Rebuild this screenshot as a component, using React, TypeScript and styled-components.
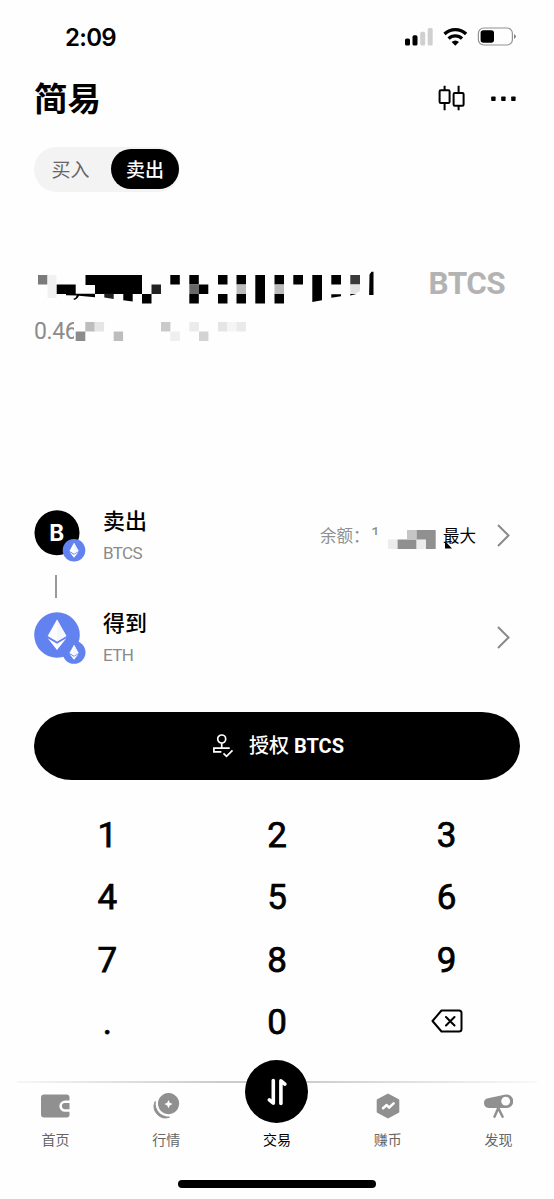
import React from 'react';
import styled, { createGlobalStyle } from 'styled-components';

const GlobalStyle = createGlobalStyle`
  * { box-sizing: border-box; }
  body { margin: 0; background: #fefefe; }
  button { border: 0; padding: 0; background: none; font: inherit; color: inherit; }
  svg { display: block; flex: none; }
`;

const latin = `Roboto, "Noto Sans CJK SC", sans-serif`;
const cjk = `"Noto Sans CJK SC", sans-serif`;

const Screen = styled.main`
  width: 554px;
  height: 1199px;
  display: flex;
  flex-direction: column;
  overflow: hidden;
  background: #fefefe;
  color: #000;
  font-family: ${cjk};

  & > * { flex: none; }
`;

const StatusBar = styled.header`
  height: 74px;
  padding: 0 37px 0 65px;
  display: flex;
  align-items: center;
  justify-content: space-between;
`;

const Clock = styled.time`
  padding-top: 2px;
  font: 600 24px/30px Inter, sans-serif;
  letter-spacing: -0.7px;
`;

const TitleBar = styled.div`
  height: 48px;
  padding: 0 37px 0 34px;
  display: flex;
  align-items: center;
  justify-content: space-between;
`;

const Title = styled.h1`
  margin: 0;
  padding-bottom: 3px;
  font-size: 33.5px;
  line-height: 43px;
  font-weight: 700;
`;

const Actions = styled.div`
  display: flex;
  align-items: center;
  gap: 25px;
`;

const Toggle = styled.div`
  width: 146px;
  height: 45px;
  margin: 25px 0 0 34px;
  padding: 2px 1px 3px 0;
  display: flex;
  border-radius: 23px;
  background: #f3f3f3;
`;

const ToggleItem = styled.button<{ $active?: boolean }>`
  width: ${p => (p.$active ? 68 : 77)}px;
  height: 40px;
  padding-right: ${p => (p.$active ? 0 : 4)}px;
  border-radius: 20px;
  background: ${p => (p.$active ? '#000' : 'transparent')};
  color: ${p => (p.$active ? '#fff' : '#666')};
  font-size: 19px;
  line-height: 38px;
  font-weight: ${p => (p.$active ? 500 : 400)};
`;

const Amount = styled.section`
  height: 88.4px;
  margin: 73px 49px 0 34px;
  display: flex;
  flex-direction: column;
`;

const AmountRow = styled.div`
  height: 45.4px;
  display: flex;
  align-items: center;
  justify-content: space-between;
`;

const Unit = styled.span`
  padding-bottom: 7px;
  font: 700 31.5px/38px ${latin};
  color: #b3b3b3;
  letter-spacing: -0.6px;
`;

const Converted = styled.div`
  height: 43px;
  display: flex;
  align-items: center;
`;

const ConvertedValue = styled.span`
  width: 40px;
  white-space: nowrap;
  font: 400 23px/30px ${latin};
  letter-spacing: -0.4px;
  color: #8c8c8c;
`;

const ConvertedMask = styled.svg`
  position: relative;
`;

const Pair = styled.section`
  height: 159.5px;
  margin: 153.6px 44px 0 34px;
  display: flex;
  flex-direction: column;
  justify-content: space-between;
`;

const TokenRow = styled.div`
  height: 57px;
  display: flex;
  align-items: center;
`;

const TokenIcon = styled.div`
  width: 52px;
  height: 52px;
  margin: 1px 17px 0 0;
`;

const TokenText = styled.div`
  flex: 1;
  height: 57px;
  display: flex;
  flex-direction: column;
  justify-content: space-between;
`;

const TokenAction = styled.span`
  margin-top: -2px;
  font-size: 22px;
  line-height: 28px;
  font-weight: 500;
`;

const TokenName = styled.span`
  font: 400 17px/22px ${latin};
  letter-spacing: -0.6px;
  color: #8a8a8a;
`;

const Connector = styled.div`
  width: 2px;
  height: 23px;
  margin-left: 21px;
  background: #999;
`;

const Balance = styled.div`
  display: flex;
  align-items: center;
  margin-right: 21px;
  font-size: 16.5px;
  line-height: 26px;
`;

const BalanceLabel = styled.span`
  width: 51px;
  white-space: nowrap;
  color: #909090;
`;

const BalanceDigit = styled.span`
  position: relative;
  width: 17px;
  padding-bottom: 2px;
  font: 400 16px/24px ${latin};
  color: #888;

  &::after {
    content: '';
    position: absolute;
    inset: 13px 4px 4px 0;
    background: #fefefe;
  }
`;

const MaxButton = styled.button`
  margin-left: 7px;
  position: relative;
`;

const Marker = styled.svg`
  position: absolute;
  left: 2px;
  top: 19px;
`;

const Approve = styled.button`
  width: 486px;
  height: 68px;
  margin: 45.5px 0 0 34px;
  padding-left: 2px;
  display: flex;
  align-items: center;
  justify-content: center;
  gap: 15px;
  border-radius: 38px / 34px;
  background: #000;
  color: #fff;
  font: 500 20px/28px ${latin};
`;

const ApproveSymbol = styled.span`
  font-weight: 700;
`;

const Keypad = styled.section`
  width: 509px;
  margin: 22.5px 0 0 22.5px;
  display: grid;
  grid-template-columns: repeat(3, 1fr);
  grid-auto-rows: 62.5px;
`;

const Key = styled.button`
  display: flex;
  align-items: center;
  justify-content: center;
  font: 400 35px/44px ${latin};
  -webkit-text-stroke: 0.75px #000;
`;

const KeyLabel = styled.span`
  padding-top: 4px;
`;

const TabArea = styled.div`
  height: 146.5px;
  display: flex;
  flex-direction: column;
  align-items: center;
`;

const Divider = styled.div`
  width: 520px;
  height: 2px;
  margin-top: 28.5px;
  flex: none;
  background: linear-gradient(90deg, #f6f6f6, #ccc 38%, #ccc 55%, #f8f8f8);
`;

const Tabs = styled.nav`
  width: 554px;
  height: 67px;
  flex: none;
  display: grid;
  grid-template-columns: repeat(5, 1fr);
  grid-template-rows: 67px;
`;

const Tab = styled.button<{ $active?: boolean }>`
  height: 66px;
  display: flex;
  flex-direction: column;
  align-items: center;
  justify-content: flex-end;
  font-size: 14px;
  line-height: 20px;
  color: ${p => (p.$active ? '#000' : '#666')};
`;

const TabGlyph = styled.span`
  height: 30px;
  margin-bottom: 8px;
  display: flex;
  align-items: center;
  color: #909090;
`;

const SwapDisc = styled.span`
  width: 63px;
  height: 63px;
  margin-bottom: 5.5px;
  flex: none;
  display: flex;
  align-items: center;
  justify-content: center;
  border-radius: 50%;
  background: #000;
`;

const HomeIndicator = styled.div`
  width: 198px;
  height: 8px;
  margin-top: 30px;
  flex: none;
  border-radius: 4px;
  background: #000;
`;

type Cell = [x: number, y: number, w: number, h: number, fill: string];

const amountCells: Cell[] = [
  [4, 5, 9.5, 9.5, '#7a7a7a'], [13.5, 5, 9, 23, '#f1f1f1'],
  [51.5, 5, 56.5, 10, '#000'], [61, 14.5, 47, 9.5, '#000'],
  [22.7, 14.5, 19, 9.5, '#000'], [117.5, 14.5, 9.5, 9.5, '#222'],
  [108, 24, 9.5, 9.5, '#000'], [136.3, 5, 9.5, 9.5, '#000'],
  [155.3, 5, 9.5, 9.5, '#000'], [155.3, 14.5, 9.5, 9.5, '#686868'],
  [155.3, 24, 9.5, 9.5, '#000'], [164.8, 14.5, 9.5, 9.5, '#000'],
  [184, 5, 9.5, 9.5, '#000'], [184, 24, 9.5, 9.5, '#000'],
  [202.5, 5, 9.5, 9.5, '#000'], [202.5, 14.5, 9.5, 9.5, '#bbb'], [202.5, 24, 9.5, 9.5, '#000'],
  [221.3, 5, 9.7, 28.5, '#000'],
  [240.5, 5, 9.5, 9.5, '#000'], [240.5, 14.5, 9.5, 9.5, '#bbb'], [240.5, 24, 9.5, 9.5, '#000'],
  [259.3, 5, 9.7, 9.5, '#000'], [297.3, 5, 9.7, 9.5, '#000'],
  [316.3, 5, 9.7, 9.5, '#3a3a3a'],
];

const convertedCells: Cell[] = [
  [0, 0, 11.3, 19, '#fefefe'],
  [11.3, 0, 9.4, 9.5, '#bdbdbd'], [20.7, 0, 9.4, 9.5, '#e5e5e5'],
  [1.7, 9.5, 9.6, 9.5, '#8c8c8c'], [39.7, 9.5, 9.4, 9.5, '#bdbdbd'],
  [87, 0, 9.4, 9.5, '#cacaca'], [96.3, 9.5, 9.6, 9.5, '#efefef'],
  [115.3, 0, 9.6, 9.5, '#ebebeb'], [125, 9.5, 9.4, 9.5, '#d3d3d3'],
  [144, 0, 9.4, 9.5, '#e5e5e5'], [153.4, 0, 9, 9.5, '#f5f5f5'], [162.4, 0, 9.6, 9.5, '#eaeaea'],
];

const balanceCells: Cell[] = [
  [0, 9.5, 9.6, 9.5, '#ececec'], [9.6, 9.5, 19, 9.5, '#909090'], [28.6, 9.5, 9.4, 9.5, '#ececec'],
  [38, 9, 9.7, 10, '#909090'], [19, 0, 9.6, 9.5, '#c6c6c6'], [28.6, 0, 19.1, 9.5, '#909090'],
];

const Cells = ({ cells }: { cells: Cell[] }) => (
  <>
    {cells.map(([x, y, width, height, fill], i) => (
      <rect key={i} x={x} y={y} width={width} height={height} fill={fill} />
    ))}
  </>
);

const MaskedAmount = () => (
  <svg width="342" height="36" viewBox="0 0 342 36">
    <Cells cells={amountCells} />
    <path d="M32 23.8h29v3.4l-16-1.4q-2 4-5 4.2l-.6-1.2q2.6-.8 3.4-3.4l-10.8-.2zM89.3 24h9.4v7.5l-9.4-1.3zM278.3 5h9.7v25.3l-9.7 1.6zM297.3 24.3h9.7v2l-9.7 1.5zM316.3 24h6l-6 1.5zM335.5 4.5l2-2.8h2V25h-4.4z" />
    <path d="M70.3 23.8h9.4V29l-9.4-1.4z" fill="#222" />
    <path d="M316.3 14.5h9.7V21l-5 3h-4.7z" fill="#e3e3e3" />
  </svg>
);

const Diamond = ({ cx, cy, s }: { cx: number; cy: number; s: number }) => (
  <g transform={`translate(${cx} ${cy}) scale(${s})`}>
    <path d="M0-15.3 9.3 1.3 0 6.8-9.3 1.3z" fill="#fff" />
    <path d="M0-15.3 9.3 1.3 0 6.8z" fill="#f4f6ff" />
    <path d="M-9.3 3.5 0 9 9.3 3.5 0 15.3z" fill="#fff" />
  </g>
);

const Chevron = () => (
  <svg width="13" height="23" viewBox="0 0 13 23" fill="none" stroke="#8a8a8a" strokeWidth="2">
    <path d="M1 1l10.5 10.5L1 22" />
  </svg>
);

const tabIcons = {
  wallet: (
    <svg width="29" height="24" viewBox="0 0 29 24" fill="currentColor">
      <path d="M3 .5h22.5q3 0 3 3v3H24a5.6 5.6 0 0 0 0 11.3h4.5v3q0 2.7-3 2.7H3q-3 0-3-3v-17q0-3 3-3z" />
      <path d="M28.5 9H24a3 3 0 0 0 0 6.2h4.5z" />
    </svg>
  ),
  market: (
    <svg width="27" height="27" viewBox="0 0 27 27" fill="currentColor">
      <path d="M2.2 9.5A11.5 11.5 0 0 0 16.5 25.2 14 14 0 0 1 2.2 9.5z" stroke="currentColor" strokeWidth="1" strokeLinejoin="round" />
      <path d="M15.5 1a10.6 10.6 0 1 0 .1 0zm0 7 1.3 2.8 2.8 1.3-2.8 1.3-1.3 2.8-1.3-2.8-2.8-1.3 2.8-1.3z" />
    </svg>
  ),
  earn: (
    <svg width="24" height="26" viewBox="0 0 24 26">
      <path d="M12 1.5 22.3 7.2v11.6L12 24.5 1.7 18.8V7.2z" fill="currentColor" stroke="currentColor" strokeWidth="2" strokeLinejoin="round" />
      <path d="M7 15.2 10.7 12l2.4 2.7 4.5-4.4" fill="none" stroke="#fff" strokeWidth="2.5" strokeLinejoin="round" strokeLinecap="round" />
    </svg>
  ),
  discover: (
    <svg width="29" height="26" viewBox="0 0 29 26" fill="currentColor">
      <path d="M4 5.3 20.5 1.7A6.8 6.8 0 1 1 22 15H4.5a4.9 4.9 0 0 1-.5-9.7z" />
      <circle cx="21.7" cy="8.2" r="4.4" fill="#fefefe" />
      <path d="m14.3 15-3.8 8.7m3.8-8.7 4.3 8.7" stroke="currentColor" strokeWidth="2.5" strokeLinecap="round" />
    </svg>
  ),
};

export default function App() {
  return (
    <Screen>
      <GlobalStyle />
      <StatusBar>
        <Clock>2:09</Clock>
        <svg width="112" height="20" viewBox="0 0 112 20">
          <rect x="0" y="11.5" width="5" height="7" rx="1.6" />
          <rect x="7.5" y="8.3" width="5" height="10.2" rx="1.6" />
          <rect x="15.2" y="4.8" width="5" height="13.7" rx="1.6" fill="#d0d0d0" />
          <rect x="22.7" y="1" width="5" height="17.5" rx="1.6" fill="#d0d0d0" />
          <g fill="none" stroke="#000" strokeWidth="3.3">
            <path d="M39.5 7a15.5 15.5 0 0 1 21.6 0M43.6 11.6a9.6 9.6 0 0 1 13.4 0" />
          </g>
          <path d="M46.6 15a5.3 5.3 0 0 1 7.4 0l-3.7 3.8z" />
          <rect x="73.4" y="1" width="34" height="17" rx="5.3" fill="none" stroke="#929292" strokeWidth="1.2" />
          <rect x="75.6" y="3.2" width="13.4" height="12.6" rx="2.8" />
          <path d="M109 7q4 2.5 0 5z" fill="#888" />
        </svg>
      </StatusBar>

      <TitleBar>
        <Title>简易</Title>
        <Actions>
          <svg width="28" height="26" viewBox="0 0 28 26" fill="none" stroke="#000" strokeWidth="2">
            <rect x="1.6" y="5.2" width="10" height="12.8" rx="1.2" />
            <rect x="15.6" y="8" width="10" height="12.8" rx="1.2" />
            <path d="M6.6 .8v4.4M6.6 18v7.2M20.6 .8V8M20.6 20.8v4.4" />
          </svg>
          <svg width="26" height="5" viewBox="0 0 26 5">
            <rect x=".2" y=".5" width="4.4" height="4.4" rx=".7" />
            <rect x="10.2" y=".5" width="4.4" height="4.4" rx=".7" />
            <rect x="20.2" y=".5" width="4.4" height="4.4" rx=".7" />
          </svg>
        </Actions>
      </TitleBar>

      <Toggle>
        <ToggleItem>买入</ToggleItem>
        <ToggleItem $active>卖出</ToggleItem>
      </Toggle>

      <Amount>
        <AmountRow>
          <MaskedAmount />
          <Unit>BTCS</Unit>
        </AmountRow>
        <Converted>
          <ConvertedValue>0.46</ConvertedValue>
          <ConvertedMask width="173" height="19" viewBox="0 0 173 19"><Cells cells={convertedCells} /></ConvertedMask>
        </Converted>
      </Amount>

      <Pair>
        <TokenRow>
          <TokenIcon>
            <svg width="52" height="52" viewBox="0 0 52 52">
              <circle cx="23" cy="22.8" r="22.5" />
              <text x="22.7" y="30.8" textAnchor="middle" fontFamily="Inter, sans-serif" fontSize="22.5" fontWeight="700" fill="#fff">B</text>
              <circle cx="40" cy="40.3" r="11.3" fill="#6282f0" />
              <Diamond cx={40} cy={40.3} s={0.49} />
            </svg>
          </TokenIcon>
          <TokenText>
            <TokenAction>卖出</TokenAction>
            <TokenName>BTCS</TokenName>
          </TokenText>
          <Balance>
            <BalanceLabel>余额：</BalanceLabel>
            <BalanceDigit>1</BalanceDigit>
            <svg width="48" height="27" viewBox="0 -8 48 27"><Cells cells={balanceCells} /></svg>
            <MaxButton>
              最大
              <Marker width="8" height="8" viewBox="0 0 8 8"><path d="M0 0 7 7.5H0z" /></Marker>
            </MaxButton>
          </Balance>
          <Chevron />
        </TokenRow>
        <Connector />
        <TokenRow>
          <TokenIcon>
            <svg width="52" height="52" viewBox="0 0 52 52">
              <circle cx="23" cy="23" r="22.8" fill="#6282f0" />
              <Diamond cx={23} cy={22.8} s={1} />
              <circle cx="40" cy="40.3" r="11.5" fill="#6282f0" />
              <Diamond cx={40} cy={40.3} s={0.49} />
            </svg>
          </TokenIcon>
          <TokenText>
            <TokenAction>得到</TokenAction>
            <TokenName>ETH</TokenName>
          </TokenText>
          <Chevron />
        </TokenRow>
      </Pair>

      <Approve>
        <svg width="22" height="24" viewBox="0 0 22 24" fill="none" stroke="#fff" strokeWidth="1.7">
          <circle cx="9.7" cy="5" r="4" />
          <path d="M9.7 9v5M17.7 14.2H1.9v3.6h7.5" />
          <path d="m11.5 19.3 3 3 6-6" />
        </svg>
        <span>授权 <ApproveSymbol>BTCS</ApproveSymbol></span>
      </Approve>

      <Keypad>
        {['1', '2', '3', '4', '5', '6', '7', '8', '9', '.', '0'].map(k => (
          <Key key={k}><KeyLabel>{k}</KeyLabel></Key>
        ))}
        <Key aria-label="delete">
          <svg width="32" height="24" viewBox="0 0 32 24" fill="none" stroke="#000" strokeWidth="2" strokeLinejoin="round" strokeLinecap="round">
            <path d="M10.5 1.5H28q2.5 0 2.5 2.5v16q0 2.5-2.5 2.5H10.5L1.5 12z" />
            <path d="m15 8 8.5 8.5m0-8.5L15 16.5" />
          </svg>
        </Key>
      </Keypad>

      <TabArea>
        <Divider />
        <Tabs>
          <Tab><TabGlyph>{tabIcons.wallet}</TabGlyph>首页</Tab>
          <Tab><TabGlyph>{tabIcons.market}</TabGlyph>行情</Tab>
          <Tab $active>
            <SwapDisc>
              <svg width="24" height="28" viewBox="0 0 24 28" fill="none" stroke="#fff" strokeWidth="3.6" strokeLinecap="round" strokeLinejoin="round">
                <path d="M8.3 2.5v22.7l-4-3.4" />
                <path d="M15.9 25.5V2.8l4 3.4" />
              </svg>
            </SwapDisc>
            交易
          </Tab>
          <Tab><TabGlyph>{tabIcons.earn}</TabGlyph>赚币</Tab>
          <Tab><TabGlyph>{tabIcons.discover}</TabGlyph>发现</Tab>
        </Tabs>
        <HomeIndicator />
      </TabArea>
    </Screen>
  );
}
